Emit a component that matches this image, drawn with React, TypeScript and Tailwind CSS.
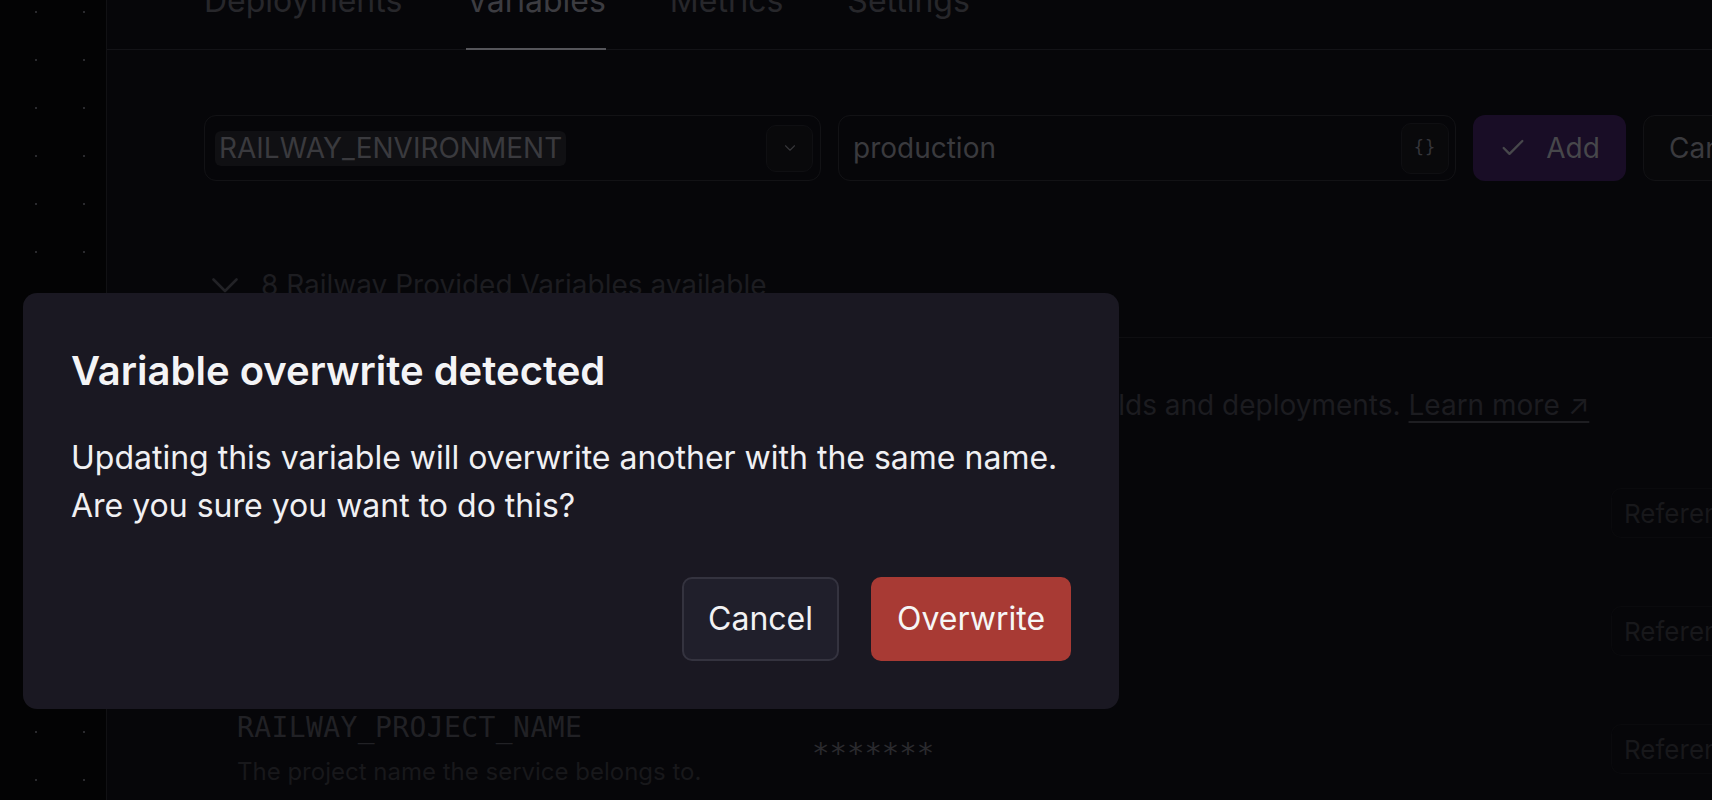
import React from "react";
import { Check, ChevronDown } from "lucide-react";

function Tab({ label, active }: { label: string; active?: boolean }) {
  return (
    <div className="relative pb-[30px]">
      <span
        className={
          "block text-[32px] leading-[36px] whitespace-nowrap " +
          (active ? "text-[#3c3c41]" : "text-[#27272b]")
        }
      >
        {label}
      </span>
      {active && (
        <div className="absolute left-0 right-0 bottom-[-1px] h-[2px] bg-[#55555a]" />
      )}
    </div>
  );
}

function VarRow({ name, desc }: { name?: string; desc?: string }) {
  return (
    <div className="h-[118px] flex items-center">
      <div className="w-[608px] shrink-0 pl-[33px] flex flex-col">
        {name && (
          <span className="font-['DejaVu_Sans_Mono',monospace] text-[28px] leading-[34px] text-[#212125] tracking-[0.4px]">
            {name}
          </span>
        )}
        {desc && (
          <span className="text-[24px] leading-[32px] text-[#18181b] mt-[11px] whitespace-nowrap">{desc}</span>
        )}
      </div>
      <div className="flex-1 pt-[10px]">
        {name && (
          <span className="font-['DejaVu_Sans_Mono',monospace] text-[29px] text-[#2a2a2e]">*******</span>
        )}
      </div>
      <div className="w-[101px] shrink-0 h-[50px] rounded-l-[10px] border border-r-0 border-[#0a0a0d] flex items-center pl-[12px] overflow-hidden">
        <span className="text-[26px] text-[#18181b] whitespace-nowrap">Reference</span>
      </div>
    </div>
  );
}

export default function App() {
  return (
    <div className="relative w-[1712px] h-[800px] overflow-hidden bg-[#060609] flex font-[Inter,sans-serif]">
      {/* sidebar */}
      <div className="w-[107px] shrink-0 h-full bg-[#030304] border-r border-[#111114] bg-[radial-gradient(circle,#2a2a2e_1px,transparent_1.5px)] bg-[length:48px_48px] bg-[position:12px_-12px]" />

      {/* main */}
      <div className="flex-1 flex flex-col min-w-0">
        {/* tabs */}
        <div className="h-[50px] shrink-0 border-b border-[#131317] flex items-end gap-[64px] pl-[97px]">
          <Tab label="Deployments" />
          <Tab label="Variables" active />
          <Tab label="Metrics" />
          <Tab label="Settings" />
        </div>

        <div className="pl-[97px] flex flex-col">
          {/* input row */}
          <div className="mt-[65px] flex gap-[17px] h-[66px]">
            <div className="w-[617px] shrink-0 rounded-[12px] border border-[#121215] flex items-center pl-[10px] pr-[7px]">
              <span className="h-[35px] px-[4px] rounded-[6px] bg-[#101013] text-[28px] leading-[35px] text-[#3a3a3e]">
                RAILWAY_ENVIRONMENT
              </span>
              <div className="ml-auto w-[47px] h-[47px] rounded-[10px] bg-[#09090b] border border-[#0f0f12] flex items-center justify-center">
                <ChevronDown size={18} strokeWidth={1.5} className="text-[#36363a]" />
              </div>
            </div>
            <div className="w-[618px] shrink-0 rounded-[12px] border border-[#121215] flex items-center pl-[14px] pr-[6px]">
              <span className="text-[28px] text-[#3a3a3e]">production</span>
              <div className="ml-auto w-[48px] h-[51px] rounded-[10px] bg-[#09090b] border border-[#0f0f12] flex items-center justify-center">
                <span className="font-['DejaVu_Sans_Mono',monospace] text-[17px] text-[#35353a] tracking-[1px]">{"{}"}</span>
              </div>
            </div>
            <div className="w-[153px] shrink-0 rounded-[12px] bg-[#190d26] flex items-center justify-center gap-[19px]">
              <Check size={28} strokeWidth={2} className="text-[#47474b]" />
              <span className="text-[28px] text-[#47474b]">Add</span>
            </div>
            <div className="w-[160px] shrink-0 rounded-[12px] border border-[#121215] bg-[#08080a] flex items-center pl-[25px]">
              <span className="text-[28px] text-[#3a3a3e]">Cancel</span>
            </div>
          </div>

          {/* provided variables */}
          <div className="mt-[86px] flex items-center h-[36px] pl-[8px]">
            <svg width="26" height="15" viewBox="0 0 26 15" fill="none" className="shrink-0">
              <polyline points="1.5,1.5 13,13 24.5,1.5" stroke="#222226" strokeWidth="2.6" strokeLinecap="round" strokeLinejoin="round" />
            </svg>
            <span className="ml-[23px] text-[28px] leading-[36px] text-[#1d1d21] whitespace-nowrap">
              8 Railway Provided Variables available
            </span>
          </div>

          <div className="mt-[34px] h-px bg-[#0e0e11]" />

          <p className="mt-[47px] text-[28px] leading-[40px] text-[#1c1c20] whitespace-nowrap pl-[147px]">
            Shared variables and service variables are available to builds and deployments.{" "}
            <span className="underline underline-offset-[6px] decoration-[1.5px] decoration-[#1e1e22]">
              Learn more ↗
            </span>
          </p>

          <div className="mt-[29px] flex flex-col">
            <VarRow />
            <VarRow />
            <VarRow name="RAILWAY_PROJECT_NAME" desc="The project name the service belongs to." />
          </div>
        </div>
      </div>

      {/* dialog */}
      <div className="absolute left-[23px] top-[293px] w-[1096px] h-[416px] rounded-[14px] bg-[#1a1822] px-[48px] pt-[54px] pb-[48px] flex flex-col">
        <h2 className="text-[40px] leading-[48px] font-semibold text-[#f4f4f6]">
          Variable overwrite detected
        </h2>
        <p className="mt-[39px] text-[32px] leading-[48px] text-[#f0f0f3]">
          Updating this variable will overwrite another with the same name.
          <br />
          Are you sure you want to do this?
        </p>
        <div className="mt-auto flex justify-end gap-[32px]">
          <button className="w-[157px] h-[84px] rounded-[10px] bg-[#201f2b] border-2 border-[#34333f] text-[32px] text-[#f2f2f4]">
            Cancel
          </button>
          <button className="w-[200px] h-[84px] rounded-[10px] bg-[#a83a34] text-[32px] text-[#f6f6f6]">
            Overwrite
          </button>
        </div>
      </div>
    </div>
  );
}
